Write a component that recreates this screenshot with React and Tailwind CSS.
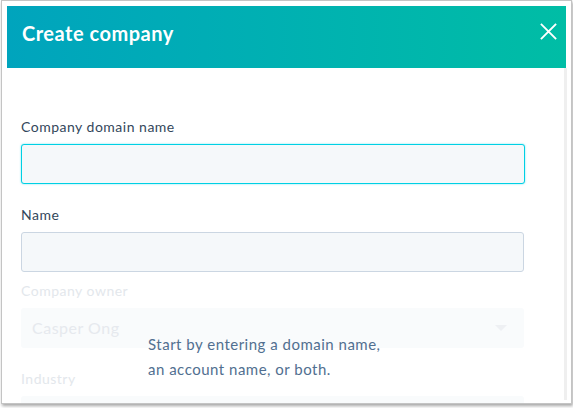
import React from 'react';

const Field = ({ label, faded, className = '', children }) => (
    <div className={className}>
        <label
            className={`block text-[14px] leading-[20px] tracking-[0.5px] ${faded ? 'text-[#e3e7ec]' : 'text-[#33475b]'}`}
        >
            {label}
        </label>
        {children}
    </div>
);

const App = () => {
    return (
        <div className="w-[573px] h-[408px] bg-white pl-[1px] overflow-hidden font-['Lato',sans-serif]">
            <div className="w-[571px] h-[404px] border border-[#c4c4c4] shadow-[1px_2px_3px_rgba(0,0,0,0.35)] pt-[5px] pl-[5px] flex flex-col overflow-hidden">
                <header className="w-[559px] h-[62px] shrink-0 flex items-center justify-between pl-[15px] pr-[9px] pb-[9px] bg-gradient-to-r from-[#00a4bd] to-[#00bda5]">
                    <h1 className="text-white font-bold text-[20px] tracking-[0.5px] leading-none mt-[1px]">Create company</h1>
                    <button className="w-[17px] h-[17px] text-white mb-[2px]">
                        <svg viewBox="0 0 16 16" className="w-full h-full" fill="none" stroke="currentColor" strokeWidth="1.8" strokeLinecap="square">
                            <path d="M1.5 1.5L14.5 14.5M14.5 1.5L1.5 14.5" />
                        </svg>
                    </button>
                </header>

                <div className="relative flex flex-1 min-h-0">
                    <div className="w-[557px] pl-[14px] pt-[49px]">
                        <Field label="Company domain name">
                            <input
                                type="text"
                                className="mt-[7px] block w-[504px] h-[40px] rounded-[3px] bg-[#f5f8fa] border border-[#00d0e4] shadow-[0_0_2px_rgba(0,208,228,0.6)] outline-none"
                            />
                        </Field>

                        <Field label="Name" className="mt-[21px]">
                            <input
                                type="text"
                                className="mt-[7px] block w-[503px] h-[40px] rounded-[3px] bg-[#f5f8fa] border border-[#cbd6e2] outline-none"
                            />
                        </Field>

                        <Field label="Company owner" faded className="mt-[9px]">
                            <div className="mt-[7px] w-[503px] h-[40px] rounded-[3px] bg-[#f9fbfc] flex items-center justify-between pl-[11px] pr-[17px]">
                                <span className="text-[16px] tracking-[0.5px] text-[#e6e9ee]">Casper Ong</span>
                                <span className="w-0 h-0 border-x-[6px] border-x-transparent border-t-[6px] border-t-[#eef0f3]" />
                            </div>
                        </Field>

                        <Field label="Industry" faded className="mt-[21px]">
                            <div className="mt-[7px] w-[503px] h-[40px] rounded-[3px] bg-[#f9fbfc]" />
                        </Field>
                    </div>

                    <div className="w-[3px] mb-[3px] bg-[#efefef]" />

                    <p className="absolute left-[141px] top-[264px] text-[15px] tracking-[0.5px] leading-[25px] text-[#516f90]">
                        Start by entering a domain name,
                        <br />
                        an account name, or both.
                    </p>
                </div>
            </div>
        </div>
    );
};

export default App;
